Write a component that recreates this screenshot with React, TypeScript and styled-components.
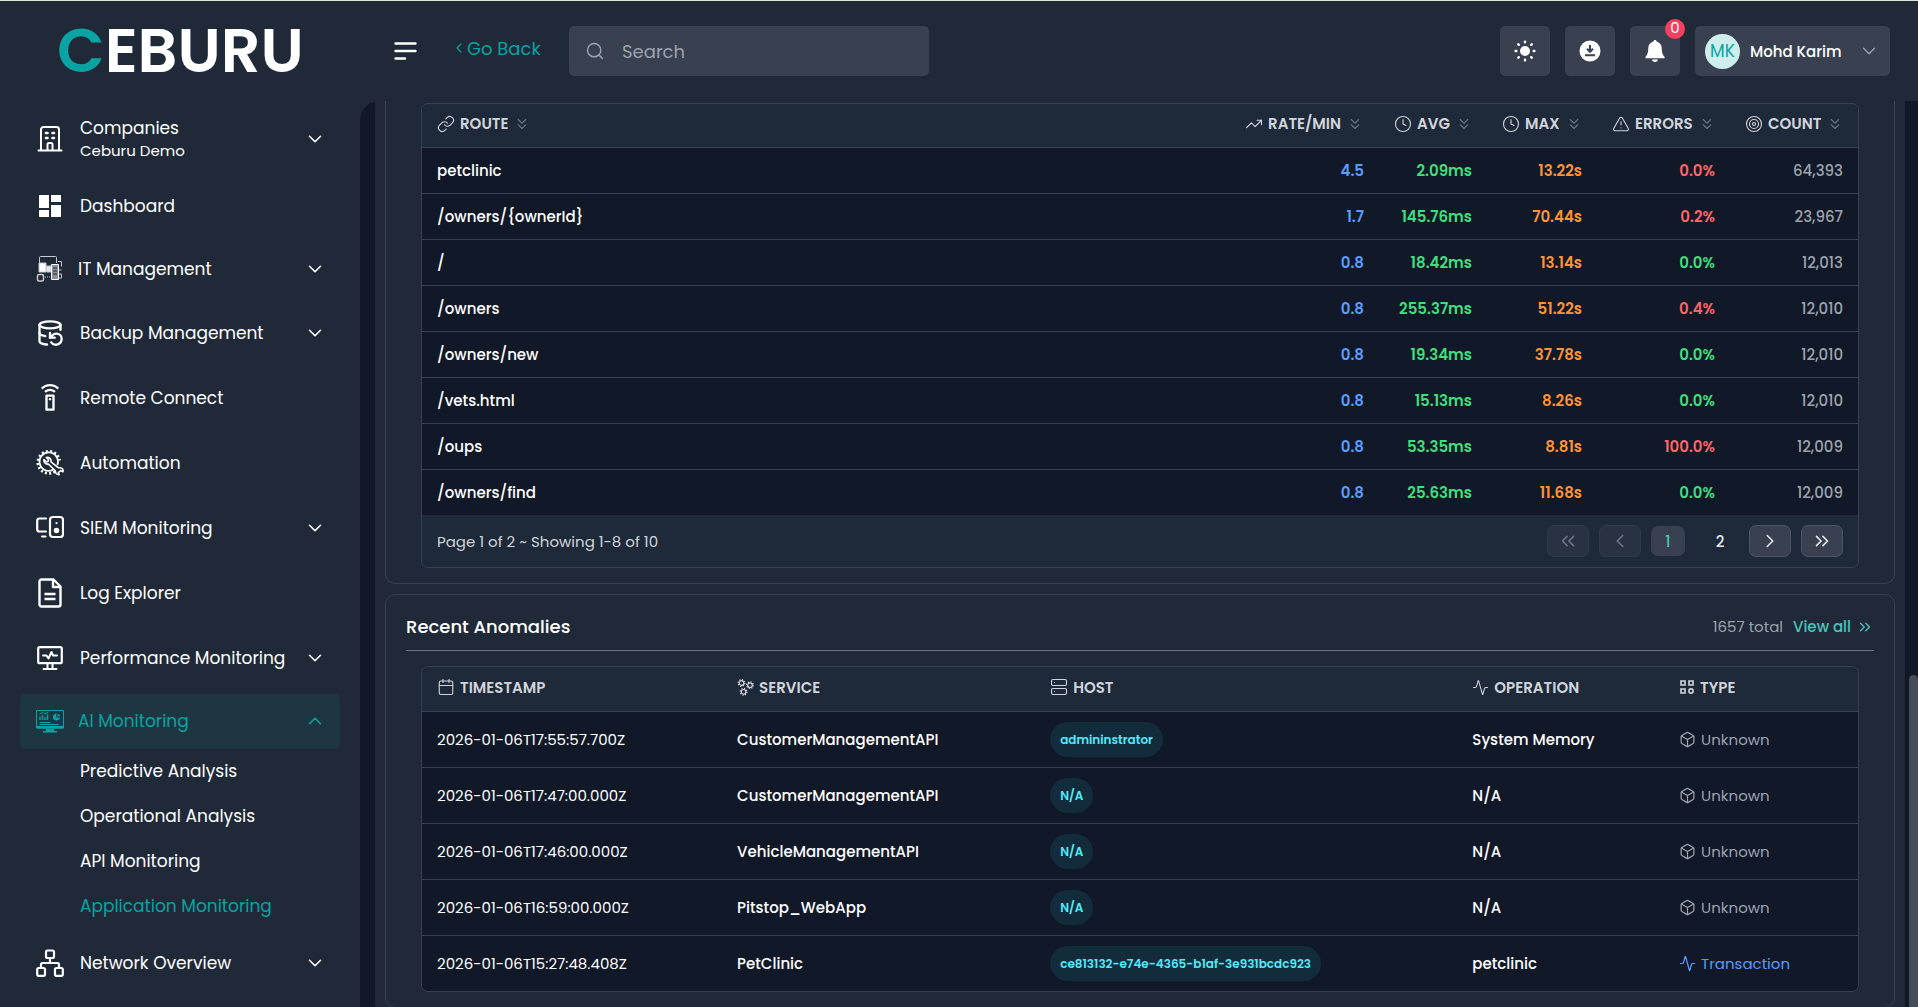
import React from "react";
import styled, { createGlobalStyle, css } from "styled-components";
import {
  Activity,
  Box,
  Calendar,
  ChevronDown,
  ChevronLeft,
  ChevronRight,
  ChevronUp,
  ChevronsDown,
  ChevronsLeft,
  ChevronsRight,
  Clock,
  DatabaseBackup,
  Link as LinkIcon,
  Search as SearchIcon,
  Server,
  Target,
  TrendingUp,
  TriangleAlert,
} from "lucide-react";
import { MdOutlineSettingsRemote } from "react-icons/md";

const c = {
  panel: "#202937",
  page: "#111827",
  head: "#1e293a",
  field: "#394150",
  line: "#374151",
  teal: "#0aa3a3",
  tealLight: "#4cc3bd",
  text: "#ffffff",
  soft: "#d1d5db",
  muted: "#9ca3af",
  blue: "#5b9dff",
  green: "#3fdf7d",
  orange: "#ff9436",
  red: "#ff6568",
};

const Global = createGlobalStyle`
  *, *::before, *::after { box-sizing: border-box; }
  body {
    margin: 0;
    background: ${c.page};
    color: ${c.text};
    font-family: Poppins, Inter, "Liberation Sans", sans-serif;
    font-size: 15px;
  }
  button, input { font: inherit; color: inherit; }
  button { border: 0; background: none; padding: 0; cursor: pointer; }
  a { color: inherit; text-decoration: none; }
  svg { display: block; flex: none; }
`;

/* ---------- shell ---------- */

const Shell = styled.div`
  display: flex;
  flex-direction: column;
  height: 100vh;
  overflow: hidden;
  border-top: 1px solid #dfe8df;
  background: ${c.panel};
`;

const TopBar = styled.header`
  display: flex;
  align-items: center;
  flex: none;
  height: 100px;
  padding: 0 28px 0 57px;
`;

const Brand = styled.a`
  width: 337px;
  font-size: 62px;
  line-height: 64px;
  font-weight: 600;
`;

const BrandAccent = styled.span`
  color: ${c.teal};
`;

const BackLink = styled.a`
  display: flex;
  align-items: center;
  width: 118px;
  margin-left: 33px;
  padding-bottom: 6px;
  color: ${c.teal};
  font-size: 18px;
`;

const SearchBox = styled.label`
  display: flex;
  align-items: center;
  gap: 15px;
  width: 360px;
  height: 50px;
  padding: 0 16px;
  border-radius: 5px;
  background: ${c.field};
  color: ${c.muted};
`;

const SearchInput = styled.input`
  flex: 1;
  min-width: 0;
  border: 0;
  outline: 0;
  background: none;
  font-size: 18px;
  &::placeholder { color: ${c.muted}; opacity: 1; }
`;

const Tools = styled.div`
  display: flex;
  gap: 15px;
  margin-left: auto;
`;

const ToolButton = styled.button`
  position: relative;
  display: grid;
  place-items: center;
  width: 50px;
  height: 50px;
  border-radius: 5px;
  background: ${c.field};
`;

const Badge = styled.span`
  position: absolute;
  top: -7px;
  right: -5px;
  width: 20px;
  height: 20px;
  border-radius: 50%;
  background: #f43f5e;
  font-size: 15px;
  line-height: 18px;
  text-align: center;
`;

const UserButton = styled.button`
  display: flex;
  align-items: center;
  gap: 10px;
  width: 195px;
  height: 50px;
  padding: 0 10px;
  border-radius: 5px;
  background: ${c.field};
  font-weight: 500;
  svg { margin-left: auto; color: ${c.muted}; }
`;

const Avatar = styled.span`
  width: 35px;
  height: 35px;
  border-radius: 50%;
  background: #cdeeec;
  color: ${c.teal};
  font-size: 17px;
  font-weight: 400;
  line-height: 35px;
  text-align: center;
`;

const Body = styled.div`
  display: flex;
  flex: 1;
  min-height: 0;
`;

/* ---------- sidebar ---------- */

const Sidebar = styled.nav`
  flex: none;
  width: 360px;
  padding: 7px 20px 0;
  overflow: hidden;
`;

const navRow = css<{ $active?: boolean; $height: number; $tight?: boolean }>`
  display: flex;
  align-items: center;
  gap: ${(p) => (p.$tight ? 14 : 16)}px;
  width: 100%;
  height: ${(p) => p.$height}px;
  margin-bottom: 7px;
  padding: 0 14px ${(p) => (p.$tight ? 2 : 0)}px 16px;
  border-radius: 5px;
  background: ${(p) => (p.$active ? "#1e3641" : "transparent")};
  color: ${(p) => (p.$active ? c.teal : c.text)};
  font-size: 17px;
  line-height: 24px;
  text-align: left;
`;

const NavButton = styled.button`${navRow}`;
const NavLink = styled.a`${navRow}`;

const NavLabel = styled.span`
  flex: 1;
  white-space: nowrap;
`;

const NavCaption = styled.span`
  display: block;
  font-size: 15px;
  line-height: 22px;
`;

const SubList = styled.ul`
  margin: -7px 0 5px;
  padding: 0;
  list-style: none;
`;

const SubLink = styled.a<{ $active?: boolean }>`
  display: block;
  padding-left: 60px;
  color: ${(p) => (p.$active ? c.teal : c.text)};
  font-size: 17px;
  line-height: 45px;
`;

/* ---------- content ---------- */

const Main = styled.main`
  display: flex;
  flex: 1;
  min-width: 0;
  padding-left: 15px;
  border-top-left-radius: 20px;
  background: ${c.page};
`;

const Content = styled.div`
  display: flex;
  flex: 1;
  flex-direction: column;
  gap: 10px;
  min-width: 0;
  padding: 0 10px;
  background: ${c.panel};
`;

const ScrollRail = styled.div`
  display: flex;
  align-items: flex-end;
  width: 13px;
  padding-left: 4px;
`;

const ScrollThumb = styled.div`
  width: 9px;
  height: 36.6%;
  border-radius: 5px 5px 0 0;
  background: #454b58;
`;

const Card = styled.section<{ $continued?: boolean }>`
  padding: ${(p) => (p.$continued ? 2 : 15)}px 20px 15px;
  border: 1px solid ${c.line};
  border-top-width: ${(p) => (p.$continued ? 0 : 1)}px;
  border-radius: ${(p) => (p.$continued ? "0 0 10px 10px" : "10px")};
`;

const CardHead = styled.div`
  display: flex;
  align-items: center;
  justify-content: space-between;
  height: 41px;
  margin-bottom: 15px;
  padding-bottom: 7px;
  border-bottom: 1px solid #6b7280;
`;

const CardTitle = styled.h2`
  margin: 0;
  font-size: 18px;
  font-weight: 500;
`;

const Summary = styled.div`
  display: flex;
  align-items: center;
  gap: 10px;
  color: ${c.muted};
`;

const ViewAll = styled.a`
  display: flex;
  align-items: center;
  gap: 5px;
  color: ${c.tealLight};
  font-weight: 500;
`;

const TableFrame = styled.div`
  margin: 0 15px;
  overflow: hidden;
  border: 1px solid ${c.line};
  border-radius: 7px;
`;

const Table = styled.table`
  width: 100%;
  table-layout: fixed;
  border-collapse: collapse;
`;

const Col = styled.col<{ $width?: string }>`
  width: ${(p) => p.$width ?? "auto"};
`;

const Th = styled.th<{ $end?: boolean; $height: number }>`
  height: ${(p) => p.$height}px;
  padding: 0 15px 4px;
  background: ${c.head};
  color: ${c.soft};
  font-weight: 600;
  text-align: ${(p) => (p.$end ? "right" : "left")};
`;

const HeadLabel = styled.span`
  display: inline-flex;
  align-items: center;
  gap: 5px;
  white-space: nowrap;
  vertical-align: middle;
`;

const SortButton = styled.button`
  display: inline-flex;
  align-items: center;
  gap: 5px;
  font-weight: 600;
  white-space: nowrap;
  vertical-align: middle;
  svg:last-child { color: #6b7280; }
`;

const Tr = styled.tr<{ $height: number }>`
  height: ${(p) => p.$height}px;
  background: ${c.page};
  border-top: 1px solid ${c.line};
`;

const Td = styled.td<{ $color?: string; $weight?: number; $end?: boolean }>`
  padding: 0 15px;
  color: ${(p) => p.$color ?? c.text};
  font-weight: ${(p) => p.$weight ?? 500};
  text-align: ${(p) => (p.$end ? "right" : "left")};
  white-space: nowrap;
`;

const HostPill = styled.span`
  display: inline-block;
  padding: 0 10px;
  border-radius: 18px;
  background: #122c3c;
  color: #53eafd;
  font-size: 12px;
  font-weight: 600;
  line-height: 35px;
  vertical-align: middle;
`;

const Kind = styled.span`
  display: flex;
  align-items: center;
  gap: 5px;
`;

const Footer = styled.div`
  display: flex;
  align-items: center;
  justify-content: space-between;
  height: 52px;
  padding: 0 15px;
  background: ${c.head};
  color: ${c.soft};
`;

const Pager = styled.nav`
  display: flex;
  align-items: center;
  gap: 10px;
`;

const StepButton = styled.button`
  display: grid;
  place-items: center;
  width: 42px;
  height: 32px;
  border: 1px solid #4b5563;
  border-radius: 7px;
  background: ${c.field};
  color: #e5e7eb;
  &:disabled { opacity: 0.4; cursor: default; }
`;

const Pages = styled.div`
  display: flex;
  gap: 18px;
  padding-right: 2px;
`;

const PageButton = styled.button<{ $current?: boolean }>`
  width: 34px;
  height: 30px;
  border-radius: 7px;
  background: ${(p) => (p.$current ? c.field : "transparent")};
  color: ${(p) => (p.$current ? c.tealLight : "#e5e7eb")};
  font-weight: 500;
`;

/* ---------- drawn icons ---------- */

const Glyph = ({ children, stroke = 2 }: { children: React.ReactNode; stroke?: number }) => (
  <svg width="28" height="28" viewBox="0 0 28 28" fill="none" stroke="currentColor" strokeWidth={stroke} strokeLinecap="round" strokeLinejoin="round" aria-hidden="true">
    {children}
  </svg>
);

const BuildingIcon = () => (
  <Glyph>
    <path d="M2.5 25.5h23M5 25V4.500a2.500 2.500 0 0 1 2.500-2.500h13a2.500 2.500 0 0 1 2.500 2.500V25M11.500 25v-5.500a1.500 1.500 0 0 1 1.500-1.500h2a1.500 1.500 0 0 1 1.500 1.500V25" />
    <path d="M10 8h1.500M16.500 8H18M10 13h1.500M16.500 13H18" strokeWidth="2.600" />
  </Glyph>
);

const DashboardIcon = () => (
  <svg width="28" height="28" viewBox="0 0 28 28" fill="currentColor" aria-hidden="true">
    <path d="M3 3h10v13H3zM3 18h10v7H3zM15 3h10v7H15zM15 13h10v12H15z" />
  </svg>
);

const ItManagementIcon = () => (
  <svg width="28" height="28" viewBox="0 0 28 28" fill="none" stroke="#c5c9cf" strokeWidth="1" aria-hidden="true">
    <path d="M3.500 8V2.500a1 1 0 0 1 1-1h15a1 1 0 0 1 1 1V8M22 6.500h3.500v5M22 15h3.500M22 19h3.500v4H22" />
    <path d="M3 8h7v9H3z" fill="#fff" />
    <path d="M10.500 11h4.500v6h-4.500z" fill="#e5e7eb" />
    <path d="M15.500 9.500h7v15h-7z" fill="#8b919b" stroke="#fff" />
    <path d="M17 13h4M17 16h4M17 19h4" stroke="#202937" />
    <rect x="1.500" y="19.500" width="6" height="6.500" rx="1.500" strokeWidth="1.500" />
    <path d="M9 22h5" strokeDasharray="1 1" />
  </svg>
);

const AutomationIcon = () => (
  <Glyph stroke={1.8}>
    <path d="M19 22.500A11 11 0 1 1 23.700 11.500" strokeWidth="2.800" strokeDasharray="2 2.200" strokeLinecap="butt" />
    <path d="M17 20.800A9.200 9.200 0 1 1 21.500 15.500" />
    <path d="M8 10.500l2.500 2.500 1.500-.5.500-1.800-2.200-2.200c3-.6 5.200 1.500 4.700 4.300l7.500 6c2.800-.5 4.800 1 4.600 3.400M8 10.500c-.5 3 1.500 5 4.300 4.500l7 6.800c.2 2.200 1.600 3.900 3.900 4l-.8-2.300 2.300-1.900 2.200 1.200" strokeWidth="1.600" />
  </Glyph>
);

const SiemIcon = () => (
  <Glyph stroke={2.2}>
    <path d="M10 4.500H3.500A2.300 2.300 0 0 0 1.200 6.800v8.400a2.300 2.300 0 0 0 2.300 2.300H10M6 22.500h3.500" />
    <rect x="14" y="3" width="13" height="20" rx="3" />
    <path d="M20.500 9v.1" />
    <circle cx="20.500" cy="16.500" r="1.700" fill="currentColor" />
  </Glyph>
);

const LogIcon = () => (
  <svg width="28" height="32" viewBox="0 0 28 32" fill="none" stroke="currentColor" strokeWidth="2.400" strokeLinejoin="round" aria-hidden="true">
    <path d="M5.500 2.500h12l7 7v18a2 2 0 0 1-2 2h-17a2 2 0 0 1-2-2v-23a2 2 0 0 1 2-2zM17 3v7h7M8.500 17h11M8.500 22h11" />
  </svg>
);

const PerformanceIcon = () => (
  <Glyph stroke={2.2}>
    <rect x="2.200" y="3.200" width="23.600" height="16" rx="1.500" />
    <path d="M7 11.500h3.500l2 3 3-6.500 1.500 3.500h4M11.500 19.500v5M16.500 19.500v5M7.500 25h13" strokeWidth="2" />
  </Glyph>
);

const AiIcon = () => (
  <svg width="28" height="28" viewBox="0 0 28 28" fill="none" stroke="currentColor" strokeWidth="1" aria-hidden="true">
    <path d="M.5 3.500h27v17.500H.5z" />
    <path d="M.5 19h27v2.500H.5zM10 22h8v2h3v1.500H7V24h3z" fill="currentColor" stroke="none" />
    <path d="M4 13V9.500M6.500 13V8M9 13v-3M11.500 13V7.500" strokeWidth="1.500" />
    <path d="M3.500 7l3-1.500L9 7l3.500-2M3.500 15.500h11M3.500 17.500h19" />
    <circle cx="20.500" cy="10" r="3.500" fill="currentColor" stroke="none" />
    <path d="M21 6v4h4.500" stroke="#1e3641" strokeWidth="1.200" />
  </svg>
);

const NetworkIcon = () => (
  <Glyph stroke={2.2}>
    <rect x="10" y="1.500" width="8" height="7.500" rx="1.500" />
    <rect x="1.200" y="19" width="7.800" height="7.800" rx="1.500" />
    <rect x="19" y="19" width="7.800" height="7.800" rx="1.500" />
    <path d="M14 9v5M5 19v-3.500A1.500 1.500 0 0 1 6.500 14h15a1.500 1.500 0 0 1 1.500 1.500V19" />
  </Glyph>
);

const MenuIcon = () => (
  <svg width="24" height="20" viewBox="0 0 24 20" fill="none" stroke="currentColor" strokeWidth="2.400" strokeLinecap="round" aria-hidden="true">
    <path d="M1.500 2.500h20M1.500 10h20M1.500 17.500h9.500" />
  </svg>
);

const SunIcon = () => (
  <svg width="22" height="22" viewBox="0 0 22 22" stroke="currentColor" strokeWidth="2.400" strokeLinecap="round" aria-hidden="true">
    <circle cx="11" cy="11" r="3.800" fill="currentColor" />
    <path d="M11 1.600v.7M11 19.700v.7M1.600 11h.7M19.700 11h.7M4.300 4.300l.5.5M17.200 17.200l.5.5M4.300 17.700l.5-.5M17.200 4.800l.5-.5" />
  </svg>
);

const DownloadIcon = () => (
  <svg width="22" height="22" viewBox="0 0 22 22" aria-hidden="true">
    <circle cx="11" cy="11" r="10.500" fill="#fff" />
    <path d="M11 5v6M8 8.800l3 3 3-3M6 15.300h10" fill="none" stroke={c.field} strokeWidth="2" />
  </svg>
);

const BellIcon = () => (
  <svg width="22" height="22" viewBox="0 0 22 22" fill="currentColor" aria-hidden="true">
    <path d="M11 0c1 0 1.600.6 1.600 1.500 3.200.8 5.100 3.400 5.100 6.600 0 4.600.9 6.700 2.800 8.700v1.500h-19v-1.500c1.900-2 2.800-4.100 2.800-8.700 0-3.200 1.900-5.800 5.100-6.600C9.400.6 10 0 11 0zM8 19.500h6c-.2 1.500-1.400 2.400-3 2.400s-2.800-.9-3-2.400z" />
  </svg>
);

const GearsIcon = () => (
  <svg width="17" height="17" viewBox="0 0 17 17" fill="none" stroke="currentColor" aria-hidden="true">
    {[
      [4.5, 4],
      [13, 6.2],
      [6.6, 12.8],
    ].map(([x, y]) => (
      <g key={x}>
        <circle cx={x} cy={y} r="2.300" strokeWidth="1.200" />
        <circle cx={x} cy={y} r="3.300" strokeWidth="1.300" strokeDasharray="1.200 1.390" />
      </g>
    ))}
  </svg>
);

const CategoryIcon = () => (
  <svg width="16" height="16" viewBox="0 0 16 16" fill="none" stroke="currentColor" strokeWidth="1.600" aria-hidden="true">
    <path d="M2 2h4v4H2zM10 2h4v4h-4zM2 10h4v4H2z" />
    <circle cx="12" cy="12" r="2.100" />
  </svg>
);

/* ---------- data ---------- */

type NavEntry = {
  label: string;
  caption?: string;
  icon: React.ReactNode;
  height?: number;
  tight?: boolean;
  expandable?: boolean;
  active?: boolean;
  children?: string[];
};

const navigation: NavEntry[] = [
  { label: "Companies", caption: "Ceburu Demo", icon: <BuildingIcon />, height: 62, expandable: true },
  { label: "Dashboard", icon: <DashboardIcon /> },
  { label: "IT Management", icon: <ItManagementIcon />, height: 55, tight: true, expandable: true },
  { label: "Backup Management", icon: <DatabaseBackup size={28} strokeWidth={2} />, expandable: true },
  { label: "Remote Connect", icon: <MdOutlineSettingsRemote size={28} /> },
  { label: "Automation", icon: <AutomationIcon /> },
  { label: "SIEM Monitoring", icon: <SiemIcon />, expandable: true },
  { label: "Log Explorer", icon: <LogIcon /> },
  { label: "Performance Monitoring", icon: <PerformanceIcon />, expandable: true },
  {
    label: "AI Monitoring",
    icon: <AiIcon />,
    height: 55,
    tight: true,
    expandable: true,
    active: true,
    children: ["Predictive Analysis", "Operational Analysis", "API Monitoring", "Application Monitoring"],
  },
  { label: "Network Overview", icon: <NetworkIcon />, expandable: true },
];

const routes = [
  { route: "petclinic", rate: "4.5", avg: "2.09ms", max: "13.22s", errors: "0.0%", failing: true, count: "64,393" },
  { route: "/owners/{ownerId}", rate: "1.7", avg: "145.76ms", max: "70.44s", errors: "0.2%", failing: true, count: "23,967" },
  { route: "/", rate: "0.8", avg: "18.42ms", max: "13.14s", errors: "0.0%", failing: false, count: "12,013" },
  { route: "/owners", rate: "0.8", avg: "255.37ms", max: "51.22s", errors: "0.4%", failing: true, count: "12,010" },
  { route: "/owners/new", rate: "0.8", avg: "19.34ms", max: "37.78s", errors: "0.0%", failing: false, count: "12,010" },
  { route: "/vets.html", rate: "0.8", avg: "15.13ms", max: "8.26s", errors: "0.0%", failing: false, count: "12,010" },
  { route: "/oups", rate: "0.8", avg: "53.35ms", max: "8.81s", errors: "100.0%", failing: true, count: "12,009" },
  { route: "/owners/find", rate: "0.8", avg: "25.63ms", max: "11.68s", errors: "0.0%", failing: false, count: "12,009" },
];

const routeColumns = [
  { label: "ROUTE", icon: LinkIcon },
  { label: "RATE/MIN", icon: TrendingUp, width: "150px" },
  { label: "AVG", icon: Clock, width: "108px" },
  { label: "MAX", icon: Clock, width: "110px" },
  { label: "ERRORS", icon: TriangleAlert, width: "133px" },
  { label: "COUNT", icon: Target, width: "128px" },
];

const anomalies = [
  { time: "2026-01-06T17:55:57.700Z", service: "CustomerManagementAPI", host: "admininstrator", operation: "System Memory", type: "Unknown" },
  { time: "2026-01-06T17:47:00.000Z", service: "CustomerManagementAPI", host: "N/A", operation: "N/A", type: "Unknown" },
  { time: "2026-01-06T17:46:00.000Z", service: "VehicleManagementAPI", host: "N/A", operation: "N/A", type: "Unknown" },
  { time: "2026-01-06T16:59:00.000Z", service: "Pitstop_WebApp", host: "N/A", operation: "N/A", type: "Unknown" },
  { time: "2026-01-06T15:27:48.408Z", service: "PetClinic", host: "ce813132-e74e-4365-b1af-3e931bcdc923", operation: "petclinic", type: "Transaction" },
];

const anomalyColumns = [
  { label: "TIMESTAMP", icon: <Calendar size={18} strokeWidth={1.5} />, width: "20.9%" },
  { label: "SERVICE", icon: <GearsIcon />, width: "21.8%" },
  { label: "HOST", icon: <Server size={18} strokeWidth={1.5} />, width: "29.4%" },
  { label: "OPERATION", icon: <Activity size={17} strokeWidth={1.5} />, width: "14.4%" },
  { label: "TYPE", icon: <CategoryIcon />, width: "auto" },
];

/* ---------- parts ---------- */

const NavItem = ({ item }: { item: NavEntry }) => {
  const shared = { $active: item.active, $height: item.height ?? 58, $tight: item.tight };
  const inner = (
    <>
      {item.icon}
      <NavLabel>
        {item.label}
        {item.caption && <NavCaption>{item.caption}</NavCaption>}
      </NavLabel>
      {item.expandable && (item.active ? <ChevronUp size={22} strokeWidth={1.75} /> : <ChevronDown size={22} strokeWidth={1.75} />)}
    </>
  );
  return (
    <>
      {item.expandable ? (
        <NavButton type="button" aria-expanded={!!item.active} {...shared}>{inner}</NavButton>
      ) : (
        <NavLink href="#" {...shared}>{inner}</NavLink>
      )}
      {item.children && (
        <SubList>
          {item.children.map((label) => (
            <li key={label}>
              <SubLink href="#" $active={label === "Application Monitoring"}>{label}</SubLink>
            </li>
          ))}
        </SubList>
      )}
    </>
  );
};

const RoutesCard = () => (
  <Card $continued>
    <TableFrame>
      <Table>
        <colgroup>
          {routeColumns.map((col) => <Col key={col.label} $width={col.width} />)}
        </colgroup>
        <thead>
          <tr>
            {routeColumns.map(({ label, icon: Icon }, i) => (
              <Th key={label} $height={43} $end={i > 0}>
                <SortButton type="button">
                  <Icon size={18} strokeWidth={1.5} />
                  {label}
                  <ChevronsDown size={18} strokeWidth={1.5} />
                </SortButton>
              </Th>
            ))}
          </tr>
        </thead>
        <tbody>
          {routes.map((r) => (
            <Tr key={r.route} $height={46}>
              <Td>{r.route}</Td>
              <Td $end $weight={600} $color={c.blue}>{r.rate}</Td>
              <Td $end $weight={600} $color={c.green}>{r.avg}</Td>
              <Td $end $weight={600} $color={c.orange}>{r.max}</Td>
              <Td $end $weight={600} $color={r.failing ? c.red : c.green}>{r.errors}</Td>
              <Td $end $color={c.muted}>{r.count}</Td>
            </Tr>
          ))}
        </tbody>
      </Table>
      <Footer>
        <span>Page 1 of 2 ~ Showing 1-8 of 10</span>
        <Pager aria-label="Pagination">
          <StepButton type="button" aria-label="First page" disabled><ChevronsLeft size={22} strokeWidth={1.75} /></StepButton>
          <StepButton type="button" aria-label="Previous page" disabled><ChevronLeft size={22} strokeWidth={1.75} /></StepButton>
          <Pages>
            <PageButton type="button" $current aria-current="page">1</PageButton>
            <PageButton type="button">2</PageButton>
          </Pages>
          <StepButton type="button" aria-label="Next page"><ChevronRight size={22} strokeWidth={1.75} /></StepButton>
          <StepButton type="button" aria-label="Last page"><ChevronsRight size={22} strokeWidth={1.75} /></StepButton>
        </Pager>
      </Footer>
    </TableFrame>
  </Card>
);

const AnomaliesCard = () => (
  <Card>
    <CardHead>
      <CardTitle>Recent Anomalies</CardTitle>
      <Summary>
        1657 total
        <ViewAll href="#">View all <ChevronsRight size={18} strokeWidth={1.75} /></ViewAll>
      </Summary>
    </CardHead>
    <TableFrame>
      <Table>
        <colgroup>
          {anomalyColumns.map((col) => <Col key={col.label} $width={col.width} />)}
        </colgroup>
        <thead>
          <tr>
            {anomalyColumns.map((col) => (
              <Th key={col.label} $height={44}>
                <HeadLabel>{col.icon}{col.label}</HeadLabel>
              </Th>
            ))}
          </tr>
        </thead>
        <tbody>
          {anomalies.map((a) => (
            <Tr key={a.time} $height={56}>
              <Td $weight={400}>{a.time}</Td>
              <Td>{a.service}</Td>
              <Td><HostPill>{a.host}</HostPill></Td>
              <Td>{a.operation}</Td>
              <Td $weight={400} $color={a.type === "Transaction" ? c.blue : c.muted}>
                <Kind>
                  {a.type === "Transaction" ? <Activity size={17} strokeWidth={1.75} /> : <Box size={17} strokeWidth={1.75} />}
                  {a.type}
                </Kind>
              </Td>
            </Tr>
          ))}
        </tbody>
      </Table>
    </TableFrame>
  </Card>
);

export default function App() {
  return (
    <Shell>
      <Global />
      <TopBar>
        <Brand href="#"><BrandAccent>C</BrandAccent>EBURU</Brand>
        <button type="button" aria-label="Toggle menu"><MenuIcon /></button>
        <BackLink href="#"><ChevronLeft size={16} strokeWidth={1.75} />Go Back</BackLink>
        <SearchBox>
          <SearchIcon size={20} strokeWidth={1.75} />
          <SearchInput type="search" placeholder="Search" aria-label="Search" />
        </SearchBox>
        <Tools>
          <ToolButton type="button" aria-label="Switch theme"><SunIcon /></ToolButton>
          <ToolButton type="button" aria-label="Downloads"><DownloadIcon /></ToolButton>
          <ToolButton type="button" aria-label="Notifications">
            <BellIcon />
            <Badge>0</Badge>
          </ToolButton>
          <UserButton type="button">
            <Avatar>MK</Avatar>
            Mohd Karim
            <ChevronDown size={22} strokeWidth={1.5} />
          </UserButton>
        </Tools>
      </TopBar>
      <Body>
        <Sidebar aria-label="Main">
          {navigation.map((item) => <NavItem key={item.label} item={item} />)}
        </Sidebar>
        <Main>
          <Content>
            <RoutesCard />
            <AnomaliesCard />
          </Content>
          <ScrollRail aria-hidden="true"><ScrollThumb /></ScrollRail>
        </Main>
      </Body>
    </Shell>
  );
}
